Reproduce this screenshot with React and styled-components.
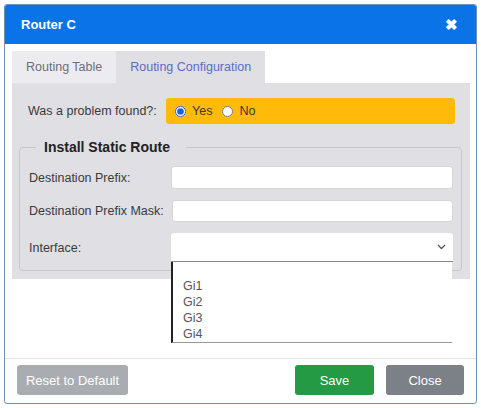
import React, { useState } from 'react';
import styled, { createGlobalStyle } from 'styled-components';

const GlobalStyle = createGlobalStyle`
  body {
    margin: 0;
    background: #ffffff;
    font-family: "Liberation Sans", Arial, sans-serif;
    font-size: 12.5px;
    color: #3a3a3a;
  }
`;

const Dialog = styled.div`
  margin: 4px;
  width: 473px;
  height: 400px;
  box-sizing: border-box;
  border: 1px solid #7090b4;
  border-radius: 3px;
  background: #fff;
  display: flex;
  flex-direction: column;
  overflow: hidden;
`;

const Header = styled.div`
  height: 39px;
  background: #0a73e8;
  display: flex;
  align-items: center;
  justify-content: space-between;
  padding: 0 18px 0 16px;
  color: #fff;
`;

const Title = styled.div`
  font-weight: bold;
  font-size: 13px;
`;

const CloseX = styled.div`
  font-weight: bold;
  font-size: 15px;
  line-height: 1;
`;

const Body = styled.div`
  flex: 1;
  padding: 7px 6px 0 7px;
`;

const Tabs = styled.div`
  display: flex;
  height: 32px;
`;

const Tab = styled.div`
  display: flex;
  align-items: center;
  padding: 0 14px;
  background: ${p => (p.active ? '#dfdfe4' : '#ececf0')};
  color: ${p => (p.active ? '#5a6cc4' : '#6b6f75')};
`;

const Panel = styled.div`
  background: #dfdfe4;
  padding: 15px 8px 8px 7px;
`;

const ProblemRow = styled.div`
  display: flex;
  align-items: center;
  padding-left: 9px;
`;

const ProblemLabel = styled.div`
  width: 138px;
`;

const Choice = styled.div`
  flex: 1;
  height: 26px;
  background: #ffba0a;
  border-radius: 3px;
  display: flex;
  align-items: center;
  padding-left: 9px;
  gap: 4px;
  margin-right: 7px;
`;

const Radio = styled.input`
  margin: 0 2px 0 0;
  width: 11px;
  height: 11px;
  accent-color: #1a62d6;
`;

const RadioLabel = styled.label`
  display: flex;
  align-items: center;
  gap: 4px;
  margin-right: 6px;
`;

const Fieldset = styled.fieldset`
  margin: 15px 0 0 0;
  padding: 11px 8px 8px 9px;
  border: 1px solid #c6c6cc;
  border-radius: 4px;
  display: flex;
  flex-direction: column;
  gap: 11px;
`;

const Legend = styled.legend`
  font-weight: bold;
  font-size: 14px;
  color: #222;
  padding: 0 16px 0 8px;
  margin-left: 7px;
`;

const Row = styled.div`
  display: flex;
  align-items: center;
  gap: 8px;
`;

const Label = styled.div`
  min-width: 134px;
  flex: 0 0 auto;
`;

const Input = styled.input`
  flex: 1;
  height: ${p => p.h || 23}px;
  box-sizing: border-box;
  border: 1px solid #d6d6da;
  border-radius: 3px;
  background: #fff;
  outline: none;
`;

const SelectWrap = styled.div`
  flex: 1;
  position: relative;
`;

const SelectBox = styled.div`
  height: 29px;
  background: #fff;
  border-radius: 3px 3px 0 0;
  border-bottom: 1px solid #8a8a8a;
  box-sizing: border-box;
  display: flex;
  align-items: center;
  justify-content: flex-end;
  padding-right: 7px;
  color: #444;
`;

const Menu = styled.div`
  position: absolute;
  top: 29px;
  left: 0;
  right: 1px;
  background: #fff;
  border-left: 2px solid #222;
  border-bottom: 1px solid #999;
  z-index: 5;
`;

const Option = styled.div`
  height: 16px;
  line-height: 16px;
  padding-left: 10px;
  color: #555;
`;

const Footer = styled.div`
  border-top: 1px solid #e2e2e6;
  padding: 6px 12px 0 12px;
  height: 38px;
  display: flex;
  align-items: flex-start;
  gap: 12px;
`;

const Button = styled.button`
  height: 30px;
  width: ${p => p.w}px;
  border: none;
  border-radius: 3px;
  background: ${p => p.bg};
  color: #fff;
  font-family: "Liberation Sans", Arial, sans-serif;
  font-size: 13px;
  margin-left: ${p => (p.push ? 'auto' : '0')};
`;

export default function App() {
  const [found, setFound] = useState('yes');
  return (
    <>
      <GlobalStyle />
      <Dialog>
        <Header>
          <Title>Router C</Title>
          <CloseX>✖</CloseX>
        </Header>
        <Body>
          <Tabs>
            <Tab>Routing Table</Tab>
            <Tab active>Routing Configuration</Tab>
          </Tabs>
          <Panel>
            <ProblemRow>
              <ProblemLabel>Was a problem found?:</ProblemLabel>
              <Choice>
                <RadioLabel>
                  <Radio type="radio" name="found" checked={found === 'yes'} onChange={() => setFound('yes')} />
                  Yes
                </RadioLabel>
                <RadioLabel>
                  <Radio type="radio" name="found" checked={found === 'no'} onChange={() => setFound('no')} />
                  No
                </RadioLabel>
              </Choice>
            </ProblemRow>
            <Fieldset>
              <Legend>Install Static Route</Legend>
              <Row>
                <Label>Destination Prefix:</Label>
                <Input />
              </Row>
              <Row>
                <Label>Destination Prefix Mask:</Label>
                <Input h={22} />
              </Row>
              <Row>
                <Label>Interface:</Label>
                <SelectWrap>
                  <SelectBox>
                    <svg width="9" height="6" viewBox="0 0 9 6">
                      <path d="M1 1l3.5 3.5L8 1" fill="none" stroke="#555" strokeWidth="1.3" />
                    </svg>
                  </SelectBox>
                  <Menu>
                    <Option />
                    <Option>Gi1</Option>
                    <Option>Gi2</Option>
                    <Option>Gi3</Option>
                    <Option>Gi4</Option>
                  </Menu>
                </SelectWrap>
              </Row>
            </Fieldset>
          </Panel>
        </Body>
        <Footer>
          <Button w={111} bg="#a9adb2">Reset to Default</Button>
          <Button w={79} bg="#239a43" push>Save</Button>
          <Button w={78} bg="#7c8087">Close</Button>
        </Footer>
      </Dialog>
    </>
  );
}
